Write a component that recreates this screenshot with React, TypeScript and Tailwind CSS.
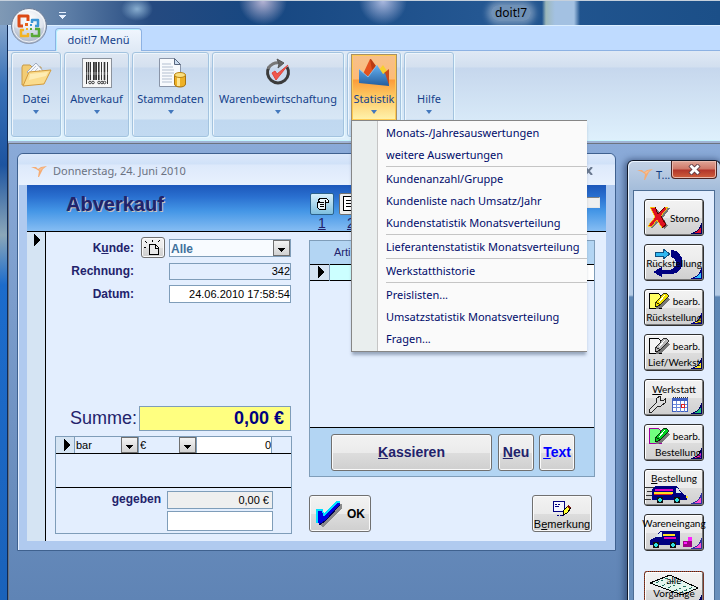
import { ReactNode } from "react";
import clsx from "clsx";

const MENU_GROUPS: string[][] = [
  ["Monats-/Jahresauswertungen", "weitere Auswertungen"],
  ["Kundenanzahl/Gruppe", "Kundenliste nach Umsatz/Jahr", "Kundenstatistik Monatsverteilung"],
  ["Lieferantenstatistik Monatsverteilung"],
  ["Werkstatthistorie"],
  ["Preislisten...", "Umsatzstatistik Monatsverteilung", "Fragen..."],
];

function OfficeOrb() {
  return (
    <svg width="38" height="38" viewBox="0 0 38 38">
      <defs>
        <radialGradient id="orb" cx="50%" cy="30%" r="70%">
          <stop offset="0" stopColor="#ffffff" />
          <stop offset="0.6" stopColor="#dfe4ec" />
          <stop offset="1" stopColor="#9ba6b8" />
        </radialGradient>
      </defs>
      <circle cx="19" cy="19" r="17.5" fill="url(#orb)" stroke="#6f7f98" />
      <path d="M2 20a17 17 0 0 0 34 0q-17 5-34 0Z" fill="#b9c4d6" opacity="0.4" />
      <circle cx="19" cy="19" r="16" fill="none" stroke="#fff" opacity="0.8" />
      <g fill="none" strokeWidth="3" strokeLinejoin="round">
        <path d="M13 19h-4v-10h9v5" stroke="#dc4a16" />
        <path d="M22 16v-3h6v6h-3" stroke="#3c96d6" strokeWidth="2.500" />
        <path d="M14 23h-3v6h7v-3" stroke="#f3b321" strokeWidth="2.500" />
        <path d="M25 22h4v7h-7v-3" stroke="#57a835" strokeWidth="2.500" />
      </g>
      <g fill="#e8641b">
        <rect x="15" y="16" width="3" height="3" />
        <rect x="20" y="17" width="2" height="2" fill="#3c96d6" />
        <rect x="16" y="21" width="2" height="2" fill="#f3b321" />
        <rect x="20" y="21" width="2" height="2" fill="#57a835" />
      </g>
    </svg>
  );
}

function FolderIcon() {
  return (
    <svg width="32" height="32" viewBox="0 0 32 32">
      <path d="M2 10l1-2h7l2 2h9v5L6 28H2Z" fill="#f2cc74" stroke="#c99a45" />
      <path d="M7 15l9-9 9 10-10 8Z" fill="#f5f7fb" stroke="#8e9ab0" strokeWidth="0.8" />
      <path d="M10 15l6-6M13 16l5-5M16 17l4-4" stroke="#b9c3d6" />
      <path d="M9 15l22-2-7 14-21 2Z" fill="#fbdc8c" stroke="#d39b3c" />
      <path d="M10 17l18-2-2 4-17 4Z" fill="#fff2c4" opacity="0.7" />
    </svg>
  );
}

function BarcodeIcon() {
  return (
    <svg width="32" height="32" viewBox="0 0 32 32">
      <rect x="1.500" y="1.500" width="29" height="29" fill="#f7f7f7" stroke="#8b929c" />
      <path
        d="M5.500 5v22M12.500 5v18M15.500 5v18M20.500 5v18M26.500 5v22M9.500 5v18"
        stroke="#333"
        strokeWidth="1"
      />
      <path d="M7.500 5v18M17.800 5v18M23.500 5v18M14 5v18" stroke="#333" strokeWidth="1.600" />
      <g fill="none" stroke="#444">
        <circle cx="9" cy="25.500" r="1.300" />
        <circle cx="12" cy="25.500" r="1.300" />
        <circle cx="18" cy="25.500" r="1.300" />
        <circle cx="21" cy="25.500" r="1.300" />
        <circle cx="23.500" cy="25.500" r="1.300" />
      </g>
      <rect x="2" y="15" width="28" height="3" fill="#fff" opacity="0.2" />
    </svg>
  );
}

function DataIcon() {
  return (
    <svg width="32" height="32" viewBox="0 0 32 32">
      <path d="M4.500 1.500h15l6 6v22h-21Z" fill="#f8fafd" stroke="#8a95a8" />
      <path d="M19.500 1.500v6h6Z" fill="#cbdcf0" stroke="#59677f" />
      <path d="M7 7h9M7 10h11M7 13h12M7 16h12M7 19h10M7 22h10M7 25h10" stroke="#b3bfd0" />
      <path d="M19.500 18v9c0 4 11 4 11 0v-9Z" fill="#eeb125" stroke="#a77310" />
      <path d="M22 20v9h3v-9Z" fill="#ffe58e" />
      <ellipse cx="25" cy="18" rx="5.500" ry="2.500" fill="#fbdf7e" stroke="#b98516" />
    </svg>
  );
}

function ClockCheckIcon() {
  return (
    <svg width="32" height="32" viewBox="0 0 32 32">
      <path d="M7 10a10.500 10.500 0 1 0 18 0" fill="none" stroke="#3b3b3b" strokeWidth="3" />
      <path d="M6 12a10.500 10.500 0 0 1 12-6" fill="none" stroke="#777" strokeWidth="3" />
      <path d="M15 2l7 4-6 5 1-4Z" fill="#666" stroke="#555" />
      <path d="M10 16l4 7 12-15-11 9-2-3Z" fill="#f0584c" stroke="#e2453c" strokeLinejoin="round" />
    </svg>
  );
}

function ChartIcon() {
  return (
    <svg width="32" height="32" viewBox="0 0 32 32">
      <defs>
        <linearGradient id="area" x1="0" y1="0" x2="0" y2="1">
          <stop offset="0" stopColor="#66b2f2" />
          <stop offset="1" stopColor="#235d9d" />
        </linearGradient>
      </defs>
      <path d="M5 17l7-15 6 8 2 12H5Z" fill="#e4521e" />
      <path d="M12 2l1 0 5 7-4 4Z" fill="#b93a12" />
      <path d="M21 13l4-5 4 6v10l-8-2Z" fill="#f7d02c" />
      <path d="M26 16l5-4v16l-5-3Z" fill="#c84a1c" />
      <path d="M1 12l9 8 9-12 4 6 2 3 2-1 4 12v1L1 26Z" fill="url(#area)" />
      <path d="M1 12l9 8 9-12" fill="none" stroke="#8ccbf9" strokeWidth="0.800" />
    </svg>
  );
}

function DownArrow() {
  return (
    <svg width="6" height="4" viewBox="0 0 6 4" className="shrink-0">
      <path d="M0 0h6L3 4Z" fill="#4378bd" />
    </svg>
  );
}

function SwooshIcon() {
  return (
    <svg width="18" height="14" viewBox="0 0 18 14" className="shrink-0">
      <path d="M1 3h5l2 2 3-2 6-1-4 3-4 8h-1l1-6-3-2Z" fill="#f5ac73" />
      <path d="M9 5l5-2-4 4Z" fill="#f9bf92" />
    </svg>
  );
}

function RecordMarker() {
  return (
    <svg width="7" height="12" viewBox="0 0 7 12" shapeRendering="crispEdges">
      <path d="M0 0l7 6-7 6Z" fill="#000" />
    </svg>
  );
}

interface RibbonGroupProps {
  label: string;
  icon?: ReactNode;
  className: string;
  active?: boolean;
  children?: ReactNode;
}

function RibbonGroup({ label, icon, className, active, children }: RibbonGroupProps) {
  return (
    <div
      className={clsx(
        "relative flex h-[85px] shrink-0 flex-col items-center rounded-[3px] border border-[#a3c3df] bg-[linear-gradient(#dfe8f3_0,#d4e0ef_14px,#c7d8ed_15px,#d8e7f5_66px,#c0d8f0_67px,#c2daf1_100%)] pt-px shadow-[inset_1px_1px_0_#eef5fc,1px_1px_0_#e8f8ff]",
        className
      )}
    >
      <button
        aria-expanded={active ? true : undefined}
        className={clsx(
          "flex h-[67px] flex-col items-center border text-[11px] text-[#15428b]",
          active
            ? "w-[46px] border-[#a79067] border-b-[#ffc637] bg-[linear-gradient(#f6c08b_0,#fdbb78_24px,#fb9c3a_25px,#fdc55f_40px,#fff3ad_100%)] shadow-[inset_0_0_0_1px_#ffca50]"
            : "w-full border-transparent"
        )}
      >
        <span className="flex h-[36px] items-center justify-center">{icon}</span>
        <span className="mb-[3px] leading-4 whitespace-nowrap">{label}</span>
        <DownArrow />
      </button>
      {children}
    </div>
  );
}

function StatisticMenu() {
  return (
    <div
      role="menu"
      className="absolute top-[67px] left-[3px] z-30 flex w-[236px] flex-col border border-r-0 border-[#868686] bg-[linear-gradient(90deg,#e9eeee_25px,#c5c5c5_25px,#c5c5c5_26px,#fafafa_26px)] py-px shadow-[0_4px_3px_-1px_rgba(60,80,110,0.45)]"
    >
      {MENU_GROUPS.map((items, index) => (
        <div
          key={items[0]}
          className={clsx(
            "relative flex flex-col",
            index > 0 &&
              "pt-[2px] before:absolute before:top-0 before:right-0 before:left-[34px] before:h-px before:bg-[#c5c5c5]"
          )}
        >
          {items.map((item) => (
            <button
              key={item}
              role="menuitem"
              className="h-[22px] pl-[34px] text-left text-[11px] whitespace-nowrap text-[#000c6b]"
            >
              {item}
            </button>
          ))}
        </div>
      ))}
    </div>
  );
}

function Ribbon() {
  return (
    <nav className="relative z-20 flex h-[90px] gap-[3px] border-t border-[#8db2e3] bg-[linear-gradient(#dfe9f5_0,#d2dfef_16px,#c6d7ed_17px,#def0fc_100%)] pt-px pl-[3px] shadow-[0_1px_0_#c3f6ff,0_3px_0_#9fb3d5]">
      <RibbonGroup label="Datei" icon={<FolderIcon />} className="w-[50px]" />
      <RibbonGroup label="Abverkauf" icon={<BarcodeIcon />} className="w-[65px]" />
      <RibbonGroup label="Stammdaten" icon={<DataIcon />} className="w-[77px]" />
      <RibbonGroup label="Warenbewirtschaftung" icon={<ClockCheckIcon />} className="w-[132px]" />
      <RibbonGroup label="Statistik" icon={<ChartIcon />} className="w-[54px]" active>
        <StatisticMenu />
      </RibbonGroup>
      <RibbonGroup label="Hilfe" className="w-[50px]" />
    </nav>
  );
}

interface ComboProps {
  id: string;
  value: string;
  label?: string;
  className: string;
}

function Combo({ id, value, label, className }: ComboProps) {
  return (
    <div className={clsx("relative flex", className)}>
      <select id={id} aria-label={label} className="min-w-0 flex-1 appearance-none pl-px outline-none">
        <option>{value}</option>
      </select>
      <span className="pointer-events-none absolute top-0 right-0 bottom-0 flex w-[17px] items-end justify-center border border-[#6f6f6f] bg-linear-to-b from-[#f3f3f3] to-[#d2d2d2] pb-[3px]">
        <svg width="7" height="4" viewBox="0 0 7 4" shapeRendering="crispEdges">
          <path d="M0 0h7L3.500 4Z" fill="#000" />
        </svg>
      </span>
    </div>
  );
}

const BUTTON =
  "rounded-[3px] border border-[#707070] bg-[linear-gradient(#f2f2f2_0,#ebebeb_50%,#dddddd_51%,#cfcfcf_100%)] shadow-[inset_0_0_0_1px_#fafafa]";

function SaleForm() {
  return (
    <section className="flex w-[237px] shrink-0 flex-col pt-[6px] text-[#22226b]">
      <div className="grid grid-cols-[79px_1fr] items-center gap-x-[7px] gap-y-[5px] pr-px text-[12px]">
        <label htmlFor="kunde" className="text-right font-bold">
          K<u>u</u>nde:
        </label>
        <div className="flex h-[19px] items-center gap-1">
          <button aria-label="Neuer Kunde" className={clsx(BUTTON, "flex h-[21px] w-[24px] shrink-0 items-center justify-center")}>
            <svg width="18" height="16" viewBox="0 0 18 16" fill="none" stroke="#000" shapeRendering="crispEdges">
              <path d="M5.500 4.500h6l3 3v7h-9Z" fill="#e8e8e8" />
              <path d="M11.500 4v4h3M8.500 0v2M1 1l2 2M0 7.500h2M14 2l2-2" />
            </svg>
          </button>
          <Combo id="kunde" value="Alle" className="h-[18px] flex-1 border border-[#7f9db9] bg-[#f8fbff] font-bold text-[#41719c]" />
        </div>
        <label htmlFor="rechnung" className="text-right font-bold">
          Rechnung:
        </label>
        <input id="rechnung" readOnly value="342" className="ml-[28px] h-[17px] min-w-0 border border-[#7f9db9] bg-[#e3eefe] text-right text-[11px] text-black" />
        <label htmlFor="datum" className="text-right font-bold">
          Datum:
        </label>
        <input id="datum" defaultValue="24.06.2010 17:58:54" className="ml-[28px] h-[18px] min-w-0 border border-[#7f9db9] bg-white text-right text-[11px] text-black" />
      </div>
      <div className="mt-[103px] flex items-center justify-between pr-px pl-[15px]">
        <label htmlFor="summe" className="text-[18px] leading-[25px]">
          Summe:
        </label>
        <input id="summe" readOnly value="0,00 €" className="h-[25px] w-[152px] border border-[#7f9db9] bg-[#ffff80] pr-[6px] text-right text-[18px] font-bold text-[#000080]" />
      </div>
      <div className="mt-[5px] flex flex-col border border-[#7f9db9] text-[11px] text-black">
        <div className="flex h-[17px] border-b border-black">
          <span className="flex w-[19px] items-center justify-center border-r border-[#7f9db9] bg-[#d5e4f3] pl-1">
            <RecordMarker />
          </span>
          <Combo id="zahlart" label="Zahlart" value="bar" className="w-[64px] border-r border-[#7f9db9]" />
          <Combo id="waehrung" label="Währung" value="€" className="w-[58px] border-r border-[#7f9db9]" />
          <input aria-label="Betrag" defaultValue="0" className="w-[75px] border-r border-[#7f9db9] bg-white text-right" />
        </div>
        <div className="h-[34px] border-b border-black" />
        <div className="flex items-start justify-end gap-[6px] pt-[3px] pr-[18px] pb-[2px]">
          <label htmlFor="gegeben" className="text-[12px] leading-4 font-bold text-[#22226b]">
            gegeben
          </label>
          <div className="flex w-[106px] flex-col gap-[2px]">
            <input id="gegeben" readOnly value="0,00 €" className="h-[18px] w-full border border-[#7f9db9] bg-[#efefef] pr-[3px] text-right" />
            <input aria-label="Rückgeld" className="h-[20px] w-full border border-[#7f9db9] bg-white" />
          </div>
        </div>
      </div>
    </section>
  );
}

function ArticlePanel() {
  return (
    <section className="flex min-w-0 flex-1 flex-col pt-[8px]">
      <div className="flex h-[237px] flex-col border border-[#7f9db9]">
        <table className="w-full table-fixed border-collapse text-[11px] text-[#22226b]">
          <thead>
            <tr className="h-[23px] bg-[#b3d5f3]">
              <th className="w-[19px]" />
              <th className="w-[50px] pl-[5px] text-left font-normal">Arti</th>
              <th />
            </tr>
          </thead>
          <tbody>
            <tr className="h-[16px] border-y border-black">
              <td className="border-r border-[#7f9db9] bg-[#d5e4f3] pl-[8px]">
                <RecordMarker />
              </td>
              <td className="bg-[#ccffff]" />
              <td className="bg-white" />
            </tr>
          </tbody>
        </table>
        <div className="mt-auto flex items-center border-t border-black bg-[#b3d5f3] pt-[6px] pr-[19px] pb-[5px] pl-[21px] text-[14px] font-bold text-[#22226b]">
          <button className={clsx(BUTTON, "mr-[6px] h-[37px] flex-1")}>
            <u>K</u>assieren
          </button>
          <button className={clsx(BUTTON, "mr-[5px] h-[37px] w-[36px]")}>
            <u>N</u>eu
          </button>
          <button className={clsx(BUTTON, "h-[37px] w-[36px] text-[#0000ff]")}>
            <u>T</u>ext
          </button>
        </div>
      </div>
      <div className="mt-[18px] flex justify-between pr-[3px]">
        <button className={clsx(BUTTON, "flex h-[37px] w-[62px] items-center justify-between pr-[5px] pl-[6px] text-[12px] font-bold")}>
          <svg width="26" height="26" viewBox="0 0 26 26" shapeRendering="crispEdges">
            <path d="M4 11h4l2 6L23 3h3v4L11 23l-4 3-4-3Z" fill="#8a8a8a" />
            <path d="M1 9h5l2 5L21 1h3v2L9 20l-5 4-2-2Z" fill="#0000e0" />
            <path d="M1 22V9h5l2 5L21 1h3" fill="none" stroke="#00e0ff" strokeWidth="1.500" />
            <path d="M3 24l6-4L24 4" fill="none" stroke="#000050" />
          </svg>
          OK
        </button>
        <button className={clsx(BUTTON, "flex h-[37px] w-[60px] flex-col items-center justify-end pt-1 text-[11px] leading-[14px] whitespace-nowrap")}>
          <svg width="20" height="17" viewBox="0 0 20 17" shapeRendering="crispEdges">
            <path d="M1.500 1.500h11v10h-11Z" fill="#f4f4ff" stroke="#000080" />
            <path d="M3 4.500h2M6 4.500h2M3 6.500h4M5 15.500h2M8 15.500h2M11 15.500h1" stroke="#000080" />
            <path d="M11 15l1-5 4-4 3 2-4 5Z" fill="#ffff30" stroke="#000" />
            <path d="M15 6l2-1 2 3-2 1Z" fill="#7a1010" />
          </svg>
          <span>
            B<u>e</u>merkung
          </span>
        </button>
      </div>
    </section>
  );
}

function SaleWindow() {
  return (
    <div className="absolute top-[9px] left-[8px] flex w-[599px] flex-col rounded-t-md border border-[#3f618f] bg-[#b0caef] px-[9px] pb-[9px] shadow-[inset_1px_1px_0_#e2eeff]">
      <header className="-mx-[9px] flex h-[31px] items-center gap-[5px] rounded-t-md bg-[linear-gradient(#dce9fb_0,#d0e1f8_10px,#dde9fb_11px,#e8f1fe_100%)] px-3 pt-[3px] text-[11px] text-[#6b7282]">
        <SwooshIcon />
        <span>Donnerstag, 24. Juni 2010</span>
        <button aria-label="Schließen" className="mr-[10px] ml-auto">
          <svg width="9" height="8" viewBox="0 0 9 8">
            <path d="M1 0l7 8M8 0l-7 8" stroke="#69788f" strokeWidth="2" />
          </svg>
        </button>
      </header>
      <div className="flex flex-col bg-[#e3eefe] font-['Liberation_Sans',Arial,sans-serif]">
        <div className="flex h-[47px] border-b border-black bg-[linear-gradient(#1c57ba_0,#2a70d0_12px,#4496e6_26px,#86bdf3_100%)]">
          <h1 className="pt-[4px] pl-[39px] text-[20px] leading-[30px] font-bold text-[#22226b] [text-shadow:1px_1px_0_#c9c0b8]">
            Abverkauf
          </h1>
          <div className="mr-auto ml-[146px] flex gap-[5px] pt-[8px] text-[14px] text-[#22226b]">
            <div className="flex flex-col items-center">
              <button aria-label="Beleg" className="flex h-[22px] w-[24px] items-center justify-center rounded-xs border border-[#2c628b] bg-linear-to-b from-[#d6effb] to-[#7fc0df]">
                <svg width="14" height="14" viewBox="0 0 14 14" fill="none" stroke="#000" shapeRendering="crispEdges">
                  <path d="M3.500 3.500l1-2h7l2 2v2h-3v7h-6l-2-2v-5h2Z" fill="#e9f6fc" />
                  <path d="M5 5.500h4M5 7.500h4M5 9.500h4M10.500 5V3" />
                </svg>
              </button>
              <u className="leading-4">1</u>
            </div>
            <div className="flex flex-col items-center">
              <button aria-label="Liste" className="flex h-[22px] w-[24px] items-center rounded-xs border border-[#707070] bg-[#eee] pl-[3px]">
                <svg width="14" height="16" viewBox="0 0 14 16" fill="none" stroke="#000" shapeRendering="crispEdges">
                  <path d="M0.500 0.500h12v14h-12Z" fill="#fff" />
                  <path d="M3 4.500h5M3 7.500h5M3 10.500h5" />
                </svg>
              </button>
              <u className="leading-4">2</u>
            </div>
          </div>
          <input aria-label="Suche" className="mt-[12px] mr-[6px] h-[11px] w-[60px] border border-[#e8e8e8] border-t-[#808080] bg-[#f0f0f0]" />
        </div>
        <div className="flex">
          <div className="flex w-[19px] shrink-0 justify-center border-r border-black bg-[#d5e4f3] pt-[2px] pl-[3px]">
            <RecordMarker />
          </div>
          <div className="flex min-w-0 flex-1 gap-[17px] pr-[11px] pb-[7px] pl-[9px]">
            <SaleForm />
            <ArticlePanel />
          </div>
        </div>
      </div>
    </div>
  );
}

function Pencil({ paper, color }: { paper: string; color: string }) {
  return (
    <svg width="22" height="18" viewBox="0 0 22 18" shapeRendering="crispEdges" className="shrink-0">
      <path d="M1.500 1.500h9l3 3v12h-12Z" fill={paper} stroke={color === "#00d020" ? "#a000a0" : "#000"} />
      <path d="M9 12l8-9 5 4-9 9-5 1Z" fill="#777" />
      <path d="M7 15l1-5 8-9h2l2 2v2l-8 8Z" fill={color} />
      <path d="M7 15l1-5 8-9h2l2 2v2l-8 8ZM8 10l4 3" fill="none" stroke="#000" strokeWidth="0.800" />
      <path d="M11 10l6-7" stroke="#fff" />
    </svg>
  );
}

function Van({ reverse }: { reverse?: boolean }) {
  return (
    <svg width="46" height="19" viewBox="0 0 46 19" shapeRendering="crispEdges">
      {reverse ? (
        <>
          <path d="M3 15V10l6-3 4-6h20v14Z" fill="#000080" />
          <path d="M9 7l4-5h2v5Z" fill="#d8e8f0" />
          <path d="M16 4h12v2H16Z" fill="#ffe020" />
          <path d="M17 7h12v2H17Z" fill="#e000c0" />
          <path d="M36 11h5V7h4v10h-9Z" fill="#a00088" />
          <path d="M41 7h4v4h-4ZM37 12h3v2h-3Z" fill="#ff20ff" />
        </>
      ) : (
        <>
          <path d="M0 2h10M2 6h6M1 10h7M0 14h6" stroke="#333" />
          <path d="M7 15V4l3-3h22l5 7 5 3v4Z" fill="#000080" />
          <path d="M31 3h2l3 5h-5Z" fill="#d8e8f0" />
          <path d="M10 4h18v2H10Z" fill="#e000c0" />
          <path d="M9 7h19v2H9Z" fill="#ffe020" />
          <path d="M9 9h18v1H9Z" fill="#e02020" />
          <path d="M41 11h2v2h-2Z" fill="#ffe020" />
        </>
      )}
      <g transform={reverse ? "translate(-6 0)" : undefined}>
        <circle cx="15" cy="15" r="3.500" fill="#101010" />
        <circle cx="15" cy="15" r="1.800" fill="#30e0e0" />
        <circle cx="32" cy="15" r="3.500" fill="#101010" />
        <circle cx="32" cy="15" r="1.800" fill="#30e0e0" />
      </g>
    </svg>
  );
}

interface ToolButtonProps {
  children: ReactNode;
  outer: string;
  inner: string;
  className?: string;
}

// each tool button carries a two-tone page curl in the lower right corner
function ToolButton({ children, outer, inner, className }: ToolButtonProps) {
  return (
    <button
      className={clsx(
        "relative h-[37px] w-full shrink-0 rounded-[3px] border border-[#303030] bg-[linear-gradient(#f2f2f2_0,#ebebeb_50%,#dddddd_51%,#cfcfcf_100%)] shadow-[inset_1px_1px_0_#fff,inset_-1px_-1px_0_#777]",
        className
      )}
    >
      <svg className="absolute right-px bottom-px" width="12" height="12" viewBox="0 0 12 12" shapeRendering="crispEdges">
        <path d="M0 12l6-3 3-3 3-6v12Z" fill={outer} />
        <path d="M4 11l4-2 3-4v6Z" fill={inner} />
      </svg>
      <span className="relative flex h-full flex-col items-center justify-center whitespace-nowrap">{children}</span>
    </button>
  );
}

function ToolWindow() {
  return (
    <div className="absolute top-[16px] left-[618px] z-10 flex w-[94px] flex-col rounded-t-md border-x border-t border-[#101828] bg-[linear-gradient(#c3d2e6_0,#a3bcda_30px,#b6cce6_134px,#5d86b5_136px,#6a90bd_100%)] px-[5px] shadow-[inset_1px_1px_0_#eaf4ff,-1px_1px_6px_2px_rgba(25,45,85,0.55)]">
      <header className="flex h-[29px] items-start pl-[3px] text-[11px] text-[#123a80]">
        <span className="mt-[6px] mr-[2px]">
          <SwooshIcon />
        </span>
        <span className="mt-[6px] w-[13px] leading-4 whitespace-nowrap">T...</span>
        <button aria-label="Schließen" className="-mr-[2px] ml-auto flex h-[18px] w-[46px] shrink-0 items-center justify-center rounded-b-[4px] border border-t-0 border-[#4a2525] bg-[linear-gradient(#e0a698_0,#cf7767_8px,#b2352a_9px,#cf5f3c_100%)] shadow-[inset_0_0_0_1px_#eab9ac]">
          <svg width="13" height="11" viewBox="0 0 13 11">
            <path d="M2 1l9 9M11 1l-9 9" stroke="#5b3b44" strokeWidth="4.500" />
            <path d="M2.500 1.500l8 8M10.500 1.500l-8 8" stroke="#fff" strokeWidth="2.800" />
          </svg>
        </button>
      </header>
      <div className="flex flex-col gap-[8px] border border-[#4d6d94] bg-[#e3eefe] px-[10px] pt-[8px] pb-[30px] font-[Lato,'Liberation_Sans',sans-serif] text-[10px] leading-[14px] text-black">
        <ToolButton outer="#000060" inner="#e01030">
          <span className="flex w-full items-center justify-between pr-[6px] pl-[3px]">
            <svg width="22" height="24" viewBox="0 0 22 24" shapeRendering="crispEdges" className="shrink-0">
              <path d="M4 3h5l4 6 6-7h3l-7 10 5 8-4 3-5-8-7 8-2-3 7-9Z" fill="#777" />
              <path d="M2 1h5l3 7 7-7h3l-7 9 5 9-4 3-5-8-6 7-3-1 7-9Z" fill="#e01020" stroke="#ffe000" strokeWidth="0.800" />
              <path d="M7 1l3 7 7-7M13 10l5 9-4 3" stroke="#600" fill="none" />
            </svg>
            Storno
          </span>
        </ToolButton>
        <ToolButton outer="#000080" inner="#30c0ff">
          <svg className="absolute" width="44" height="30" viewBox="0 0 44 30" shapeRendering="crispEdges">
            <path d="M3 4h8V1l7 5-7 5V8H3Z" fill="#30b8f0" stroke="#105080" />
            <path d="M19 2c14 0 16 22 1 24H10v3l-9-5 9-5v3h8c8-2 8-11 1-13Z" fill="#000080" />
          </svg>
          <span className="relative">Rückstellung</span>
        </ToolButton>
        <ToolButton outer="#000080" inner="#ffe820">
          <span className="flex items-center gap-[3px]">
            <Pencil paper="#ffff60" color="#f0e000" />
            bearb.
          </span>
          <span>Rückstellung</span>
        </ToolButton>
        <ToolButton outer="#000060" inner="#ffe820">
          <span className="flex items-center gap-[3px]">
            <Pencil paper="#f4f4f4" color="#b8b8b8" />
            bearb.
          </span>
          <span>Lief/Werkst</span>
        </ToolButton>
        <ToolButton outer="#000060" inner="#20c080">
          <span>
            <u>W</u>erkstatt
          </span>
          <svg width="42" height="17" viewBox="0 0 42 17" shapeRendering="crispEdges" className="mr-3">
            <path d="M2 14l7-7V3l4-3v4l3 1 2-2v4l-4 3h-3l-6 6-3 0Z" fill="#ddd" stroke="#222" />
            <rect x="25.500" y="2.500" width="15" height="13" fill="#fff" stroke="#4060c0" />
            <path d="M25 3h16v2H25Z" fill="#4060c0" />
            <path d="M26 8.500h14M26 11.500h14M29.500 5v11M33.500 5v11M37.500 5v11" stroke="#6a88d8" />
            <path d="M26 1.500h15" stroke="#333" strokeDasharray="1 1" />
            <rect x="34.500" y="8.500" width="3" height="3" fill="#fff" stroke="#e02020" />
          </svg>
        </ToolButton>
        <ToolButton outer="#000060" inner="#ff20d0">
          <span className="flex items-center gap-[3px]">
            <Pencil paper="#70ff80" color="#00d020" />
            bearb.
          </span>
          <span className="pl-2">Bestellung</span>
        </ToolButton>
        <ToolButton outer="#3030a0" inner="#ff50d0">
          <span>
            <u>B</u>estellung
          </span>
          <span className="mr-3">
            <Van />
          </span>
        </ToolButton>
        <ToolButton outer="#3030a0" inner="#ff50d0">
          <span>Wareneingang</span>
          <span className="mr-2">
            <Van reverse />
          </span>
        </ToolButton>
        <ToolButton outer="#000060" inner="#888888" className="mt-[12px] leading-[13px] outline-1 -outline-offset-1 outline-dotted outline-[#c04020]">
          <svg className="absolute top-[2px]" width="50" height="22" viewBox="0 0 50 22" shapeRendering="crispEdges">
            <path d="M1 9L21 1l28 13-16 7Z" fill="#e4f5ee" stroke="#000" />
            <path d="M7 9l14-6M13 12l14-6M19 14l14-6M25 17l14-6M31 19l13-6" stroke="#207060" strokeDasharray="3 2" />
          </svg>
          <span className="relative">alle</span>
          <span className="relative mb-[5px]">Vorgänge</span>
        </ToolButton>
      </div>
    </div>
  );
}

export default function App() {
  return (
    <div className="relative flex h-screen flex-col overflow-hidden border-t border-[#c5d0dc] bg-[linear-gradient(90deg,#7f99b5_0,#5b7ca5_70px,#254a80_150px,#174781_260px,#245792_480px,#1b4f88_100%)] font-['Noto_Sans','Open_Sans',sans-serif]">
      <div className="relative flex h-6 shrink-0 items-center justify-center bg-[radial-gradient(ellipse_16px_12px_at_137px_8px,#89aed0,transparent),radial-gradient(ellipse_24px_24px_at_263px_0px,#b6b4d4,transparent),radial-gradient(ellipse_24px_24px_at_383px_0px,#abb9df,transparent),linear-gradient(90deg,transparent_542px,#9db8ba_546px,#a3c1e2_555px,#a3c1e2_574px,transparent_580px)] pl-[302px] text-[12px]">
        <svg className="absolute top-[11px] left-[59px]" width="7" height="7" viewBox="0 0 7 7" shapeRendering="crispEdges">
          <path d="M0 0h7v1H0Z" fill="#e6f0ff" />
          <path d="M0 3h7L3.500 7Z" fill="#e6f0ff" />
        </svg>
        <span className="rounded-full bg-white/35 px-1 leading-4 text-black shadow-[0_0_6px_4px_rgba(255,255,255,0.35)]">doit!7</span>
      </div>
      <div className="flex min-h-0 flex-1">
        <div className="w-2 shrink-0 border-r border-[#102a55] bg-[linear-gradient(#83a4cc_0,#3871b8_60px,#1d54a0_140px,#8ba7b9_210px,#1c6ccc_260px,#1a62ba_100%)]" />
        <div className="flex min-w-0 flex-1 flex-col border-t border-[#dbeeff]">
          <div className="relative flex h-6 shrink-0 items-end bg-[#bfdbff] pl-[47px]">
            <button className="relative z-30 -mb-px h-[23px] w-[87px] rounded-t-[4px] border border-b-0 border-[#8db2e3] bg-linear-to-b from-[#f0f6fe] to-[#dfe9f5] text-[11px] text-[#15428b] shadow-[inset_1px_1px_0_#b4f0ff]">
              doit!7 Menü
            </button>
          </div>
          <Ribbon />
          <main className="relative mt-[3px] min-h-0 flex-1 border-t border-l border-[#6c7480] bg-linear-to-b from-[#8aaad8] to-[#5f84b5]">
            <SaleWindow />
            <ToolWindow />
          </main>
        </div>
      </div>
      <button aria-label="Office" className="absolute top-[6px] left-[10px] z-40">
        <OfficeOrb />
      </button>
    </div>
  );
}
